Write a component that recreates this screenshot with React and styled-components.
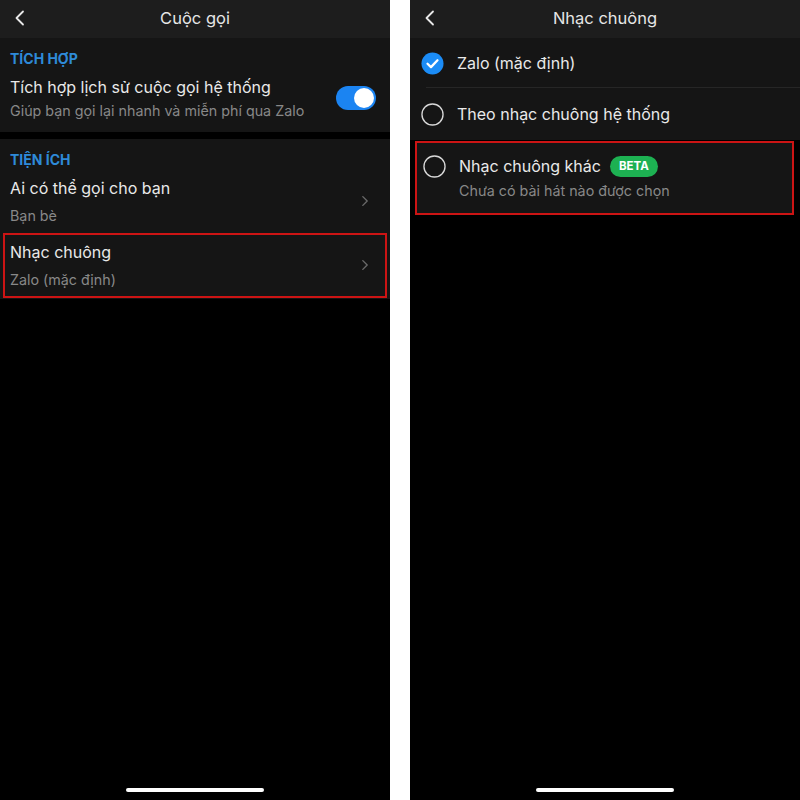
import React from 'react'
import styled, { createGlobalStyle } from 'styled-components'

const Global = createGlobalStyle`
  body {
    margin: 0;
    background: #ffffff;
    font-family: Inter, "Noto Sans", sans-serif;
  }
`

const Chevron = ({ dir = 'left', color = '#e8e8e8', size = 16 }) => (
  <svg width={size} height={size} viewBox="0 0 16 16" fill="none">
    {dir === 'left'
      ? <path d="M11 1.5 L4.5 8 L11 14.5" stroke={color} strokeWidth="1.8" strokeLinecap="round" strokeLinejoin="round" />
      : <path d="M5.5 3 L10.5 8 L5.5 13" stroke={color} strokeWidth="1.6" strokeLinecap="round" strokeLinejoin="round" />}
  </svg>
)

const Radio = ({ checked }) => checked ? (
  <svg width="23" height="23" viewBox="0 0 24 24">
    <circle cx="12" cy="12" r="11.5" fill="#1b8cf6" />
    <path d="M6.8 12.3 L10.4 15.8 L17.2 8.6" stroke="#fff" strokeWidth="2.4" fill="none" strokeLinecap="round" strokeLinejoin="round" />
  </svg>
) : (
  <svg width="23" height="23" viewBox="0 0 24 24">
    <circle cx="12" cy="12" r="11" fill="none" stroke="#d8d8d8" strokeWidth="1.4" />
  </svg>
)

const CallSettings = () => (
  <Phone>
    <Header>
      <Back><Chevron /></Back>
      Cuộc gọi
    </Header>
    <Section>
      <SectionLabel>TÍCH HỢP</SectionLabel>
      <Row>
        <RowText>
          <Title>Tích hợp lịch sử cuộc gọi hệ thống</Title>
          <Sub>Giúp bạn gọi lại nhanh và miễn phí qua Zalo</Sub>
        </RowText>
        <Toggle><Knob /></Toggle>
      </Row>
    </Section>
    <Section $top={7} $bottom={1}>
      <SectionLabel>TIỆN ÍCH</SectionLabel>
      <Row $tall>
        <RowText $gap={8}>
          <Title>Ai có thể gọi cho bạn</Title>
          <Sub>Bạn bè</Sub>
        </RowText>
        <Chevron dir="right" color="#6a6a6a" size={14} />
      </Row>
      <Highlight>
        <Row $tall>
          <RowText $gap={8}>
            <Title>Nhạc chuông</Title>
            <Sub>Zalo (mặc định)</Sub>
          </RowText>
          <Chevron dir="right" color="#6a6a6a" size={14} />
        </Row>
      </Highlight>
    </Section>
    <HomeBar />
  </Phone>
)

const RingtonePicker = () => (
  <Phone>
    <Header>
      <Back><Chevron /></Back>
      Nhạc chuông
    </Header>
    <List>
      <Option $h={50} $divider>
        <Radio checked />
        <Title>Zalo (mặc định)</Title>
      </Option>
      <Option $h={52}>
        <Radio />
        <Title>Theo nhạc chuông hệ thống</Title>
      </Option>
      <HighlightOption>
        <Option $h={70} $top>
          <Radio />
          <RowText $gap={5}>
            <TitleLine>
              <Title>Nhạc chuông khác</Title>
              <Badge>BETA</Badge>
            </TitleLine>
            <Sub>Chưa có bài hát nào được chọn</Sub>
          </RowText>
        </Option>
      </HighlightOption>
    </List>
    <HomeBar />
  </Phone>
)

const App = () => (
  <>
    <Global />
    <Page>
      <CallSettings />
      <RingtonePicker />
    </Page>
  </>
)

const Page = styled.div`
  display: flex;
  gap: 20px;
  width: 800px;
  height: 800px;
`
const Phone = styled.div`
  width: 390px;
  height: 800px;
  background: #000;
  display: flex;
  flex-direction: column;
  color: #ececec;
`
const Header = styled.div`
  height: 38px;
  background: #1d1d1d;
  display: flex;
  align-items: center;
  justify-content: center;
  position: relative;
  font-size: 16.5px;
  color: #e6e6e6;
  padding-bottom: 2px;
  box-sizing: border-box;
`
const Back = styled.div`
  position: absolute;
  left: 12px;
  top: 10px;
  display: flex;
`
const Section = styled.div`
  background: #151515;
  margin-top: ${p => p.$top || 0}px;
  padding-top: 12px;
  padding-bottom: ${p => p.$bottom || 0}px;
  display: flex;
  flex-direction: column;
`
const SectionLabel = styled.div`
  color: #2e8ad8;
  font-weight: 700;
  font-size: 14px;
  padding: 0 10px;
  height: 18px;
  line-height: 18px;
`
const Row = styled.div`
  display: flex;
  align-items: center;
  justify-content: space-between;
  padding: ${p => p.$tall ? '8px 18px 8px 10px' : '8px 14px 12px 10px'};
`
const RowText = styled.div`
  display: flex;
  flex-direction: column;
  gap: ${p => p.$gap || 4}px;
`
const Title = styled.div`
  font-size: 16px;
  line-height: 22px;
  color: #e9e9e9;
`
const Sub = styled.div`
  font-size: 14.3px;
  line-height: 18px;
  color: #888888;
`
const Toggle = styled.div`
  width: 40px;
  height: 24px;
  border-radius: 12px;
  background: #1b84f2;
  display: flex;
  align-items: center;
  justify-content: flex-end;
  padding: 0 2px;
  box-sizing: border-box;
`
const Knob = styled.div`
  width: 20px;
  height: 20px;
  border-radius: 50%;
  background: #fff;
`
const Highlight = styled.div`
  border: 2px solid #cc1414;
  margin: 0 3px;
  & > div { padding: 6px 13px 7px 5px; }
`
const List = styled.div`
  display: flex;
  flex-direction: column;
`
const Option = styled.div`
  height: ${p => p.$h}px;
  box-sizing: border-box;
  background: #151515;
  display: flex;
  align-items: ${p => p.$top ? 'flex-start' : 'center'};
  gap: 13px;
  padding: ${p => p.$top ? '12px 0 0 11px' : '0 0 0 11px'};
  position: relative;
  ${p => p.$divider && `
    &::after {
      content: '';
      position: absolute;
      left: 16px;
      right: 0;
      bottom: 0;
      height: 1px;
      background: #262626;
    }
  `}
`
const HighlightOption = styled.div`
  border: 2px solid #cc1414;
  margin: 1px 6px 0 5px;
  & > div { padding-left: 6px; }
`
const TitleLine = styled.div`
  display: flex;
  align-items: center;
  gap: 9px;
`
const Badge = styled.div`
  background: #1db152;
  color: #fff;
  font-weight: 700;
  font-size: 11.5px;
  border-radius: 11px;
  height: 21px;
  line-height: 21px;
  padding: 0 9px;
`
const HomeBar = styled.div`
  margin: auto auto 8px;
  width: 138px;
  height: 4px;
  border-radius: 2px;
  background: #fff;
`

export default App
